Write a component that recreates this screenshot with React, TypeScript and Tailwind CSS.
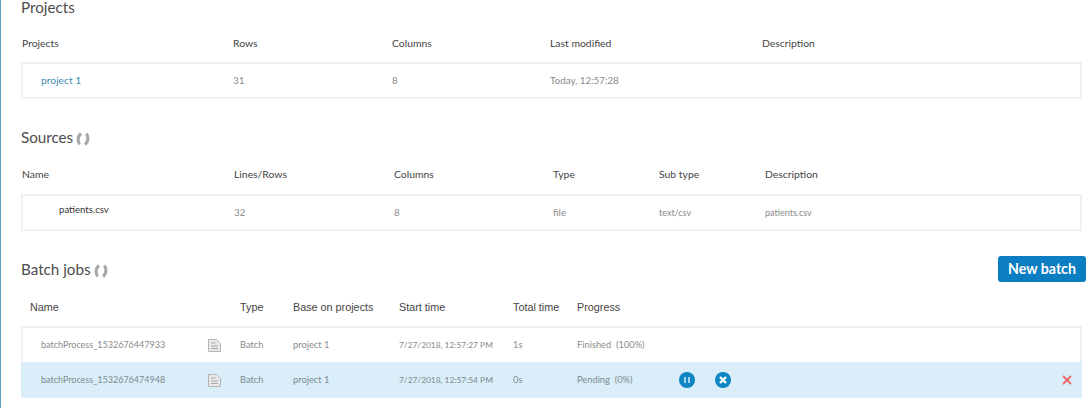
import { X } from 'lucide-react';

const projectHead = 'grid grid-cols-[211px_159px_158px_212px_1fr]';
const projectRow = 'grid grid-cols-[210px_159px_158px_212px_1fr]';
const sourceHead = 'grid grid-cols-[212px_160px_159px_106px_106px_1fr]';
const sourceRow = 'grid grid-cols-[211px_160px_159px_106px_106px_1fr]';
const batchHead = 'grid grid-cols-[210px_53px_106px_114px_64px_1fr]';
const batchRow = 'grid grid-cols-[167px_32px_53px_106px_114px_64px_102px_36px_1fr]';

function Spinner() {
    return (
        <svg width="14" height="14" viewBox="0 0 14 14" className="mt-[3px] ml-[3px]" fill="none" stroke="#a8a8a8" strokeWidth="3">
            <path d="M5 1.5 C1.5 4.5 1.5 8.5 3.5 12.5" />
            <path d="M9 12.5 C12.5 9.5 12.5 5.5 10.5 1.5" />
        </svg>
    );
}

function DocIcon() {
    return (
        <svg width="13" height="13" viewBox="0 0 13 13" className="block">
            <path d="M0.5 0.5 H8.5 L12.5 4.5 V12.5 H0.5 Z" fill="#e8e8e8" stroke="#b5b5b5" />
            <path d="M3 4 H7.5 M3 7 H10 M3 9.5 H10" stroke="#a8a8a8" strokeWidth="1" />
        </svg>
    );
}

function PauseIcon() {
    return (
        <svg width="16" height="16" viewBox="0 0 16 16" className="block">
            <circle cx="8" cy="8" r="8" fill="#0f85c2" />
            <path d="M6 5 V11 M10 5 V11" stroke="#ffffff" strokeWidth="1.6" opacity="0.8" />
        </svg>
    );
}

function CancelIcon() {
    return (
        <svg width="16" height="16" viewBox="0 0 16 16" className="block">
            <circle cx="8" cy="8" r="8" fill="#0f85c2" />
            <path d="M5 5 L11 11 M11 5 L5 11" stroke="#ffffff" strokeWidth="2.4" />
        </svg>
    );
}

export default function App() {
    return (
        <div className="w-[1089px] h-[408px] overflow-hidden bg-white border-l border-[#5f9db9] pl-[20px] font-['Lato','Noto_Sans',sans-serif] antialiased text-[#4a4a4a]">
            <h2 className="h-[14px] text-[15.2px] leading-[15px] text-[#4d4d4d]">Projects</h2>

            <div className={`${projectHead} mt-[17px] h-[31px] pl-px items-start text-[10.4px] leading-[24px] text-[#444]`}>
                <div>Projects</div>
                <div>Rows</div>
                <div>Columns</div>
                <div>Last modified</div>
                <div>Description</div>
            </div>
            <div className={`${projectRow} w-[1061px] h-[37px] items-center border-2 border-[#f1f1f1] text-[9.8px] text-[#8a8a8a]`}>
                <div className="pl-[18px] text-[10.3px] text-[#3f8bb3]">project 1</div>
                <div>31</div>
                <div>8</div>
                <div>Today, 12:57:28</div>
                <div />
            </div>

            <div className="flex mt-[30px] h-[16px]">
                <h2 className="text-[15.2px] leading-[16px] text-[#4d4d4d]">Sources</h2>
                <Spinner />
            </div>

            <div className={`${sourceHead} mt-[16px] h-[33px] pl-px text-[10.4px] leading-[27px] text-[#444]`}>
                <div>Name</div>
                <div>Lines/Rows</div>
                <div>Columns</div>
                <div>Type</div>
                <div>Sub type</div>
                <div>Description</div>
            </div>
            <div className={`${sourceRow} w-[1061px] h-[37px] items-center border-2 border-[#f1f1f1] text-[9.8px] text-[#8a8a8a]`}>
                <div className="pl-[36px] pb-1 text-[9.6px] text-[#333]">patients.csv</div>
                <div>32</div>
                <div>8</div>
                <div>file</div>
                <div className="text-[9px]">text/csv</div>
                <div className="text-[9px]">patients.csv</div>
            </div>

            <div className="flex justify-between items-start mt-[25px] h-[26px] w-[1065px]">
                <div className="flex mt-[5px]">
                    <h2 className="text-[15.2px] leading-[16px] text-[#4d4d4d]">Batch jobs</h2>
                    <Spinner />
                </div>
                <button className="w-[88px] h-[26px] rounded-[3px] bg-[#0b7dc1] text-white text-[14.2px] font-bold">New batch</button>
            </div>

            <div className={`${batchHead} mt-[12px] h-[26px] pl-[9px] text-[10.8px] leading-[26px] font-['Liberation_Sans',sans-serif] text-[#444]`}>
                <div>Name</div>
                <div>Type</div>
                <div>Base on projects</div>
                <div>Start time</div>
                <div>Total time</div>
                <div>Progress</div>
            </div>
            <div className="w-[1061px] mt-[6px] border-t-2 border-x-2 border-[#f1f1f1] text-[9.3px] text-[#8a8a8a]">
                <div className={`${batchRow} h-[34px] pl-[18px] items-center whitespace-nowrap`}>
                    <div className="text-[9px]">batchProcess_1532676447933</div>
                    <DocIcon />
                    <div>Batch</div>
                    <div>project 1</div>
                    <div className="text-[8.4px]">7/27/2018, 12:57:27 PM</div>
                    <div>1s</div>
                    <div>Finished&nbsp;&nbsp;(100%)</div>
                </div>
            </div>
            <div className={`${batchRow} w-[1061px] h-[36px] pl-[20px] items-center whitespace-nowrap bg-[#d9eef8] text-[9.3px] text-[#808a90]`}>
                <div className="text-[9px]">batchProcess_1532676474948</div>
                <DocIcon />
                <div>Batch</div>
                <div>project 1</div>
                <div className="text-[8.4px]">7/27/2018, 12:57:54 PM</div>
                <div>0s</div>
                <div>Pending&nbsp;&nbsp;(0%)</div>
                <PauseIcon />
                <div className="flex justify-between items-center pr-[8px]">
                    <CancelIcon />
                    <X size={14} strokeWidth={3.2} color="#ea6a6a" />
                </div>
            </div>
        </div>
    );
}
